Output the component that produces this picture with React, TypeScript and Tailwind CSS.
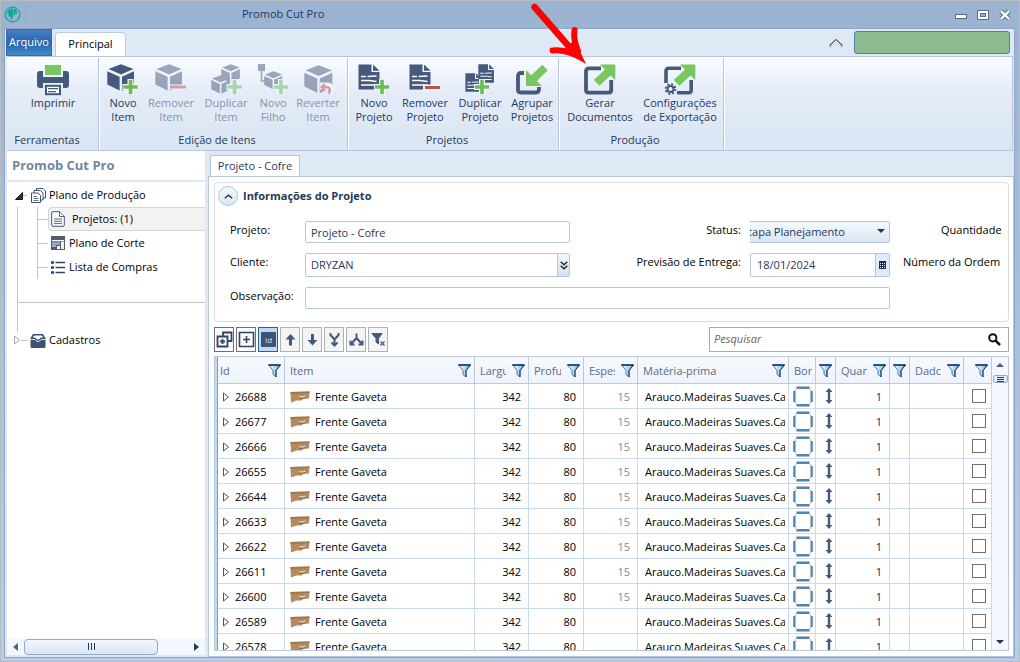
import { useState } from 'react'
import type { ReactNode } from 'react'

const NAVY = '#44597c'
const GREEN = '#79c760'

function Cube({ x = 0, y = 0, s = 1 }: { x?: number; y?: number; s?: number }) {
  return (
    <g transform={`translate(${x} ${y}) scale(${s})`} fill={NAVY}>
      <path d="M1.5 5 14 .3 26.5 5 14 10.5Z" />
      <path d="M.3 7.3 12.6 12.8V26.5L.3 20.5Z" />
      <path d="M15 12.8 27 7.3V20.5L15 26.8Z" />
    </g>
  )
}

function Plus({ x, y }: { x: number; y: number }) {
  return (
    <g transform={`translate(${x} ${y})`}>
      <path d="M-8 0H8M0-8V8" stroke="#f5f8fd" strokeWidth="6" />
      <path d="M-7.2 0H7.2M0-7.2V7.2" stroke="#6dbb55" strokeWidth="3.6" />
    </g>
  )
}

function Doc({ x = 0, y = 0, s = 1 }: { x?: number; y?: number; s?: number }) {
  return (
    <g transform={`translate(${x} ${y}) scale(${s})`}>
      <path d="M.5.5H13.5V8H21.5V25.5H.5Z" fill={NAVY} />
      <path d="M15 .5 21.5 6.8H15Z" fill={NAVY} />
      <path d="M3 12.5H8M9.5 12.5 18.5 12M3 16.5H11L18.5 17.5M3 21H18.5" stroke="#fff" strokeWidth="1.3" fill="none" />
    </g>
  )
}

function Icon({ children }: { children: ReactNode }) {
  return <svg width="32" height="32" viewBox="0 0 32 32" fill="none">{children}</svg>
}

const printIcon = (
  <Icon>
    <rect x="8" y="1" width="16" height="10" fill={GREEN} />
    <path d="M0 10Q0 7 3 7H6V13H26V7H29Q32 7 32 10V21Q32 24 29 24H26V19H6V24H3Q0 24 0 21Z" fill={NAVY} />
    <rect x="9" y="21.8" width="14" height="8.4" fill="#fff" stroke={NAVY} strokeWidth="2" />
    <path d="M11 24.7H21M11 27.6H19" stroke={NAVY} strokeWidth="1.2" />
  </Icon>
)

const exportArrow = 'M9.8 16 21 5.5 15.8.5H31.3V16L26.5 11.5 15.5 21.8Z'

const itemActions = [
  { label: ['Novo', 'Item'], width: 'w-11', icon: <Icon><Cube /><Plus x={23.5} y={23} /></Icon> },
  {
    label: ['Remover', 'Item'], width: 'w-[52px]', off: true,
    icon: <Icon><Cube /><path d="M13.5 23H31" stroke="#f5f8fd" strokeWidth="5" /><path d="M15 23H31" stroke="#c0504d" strokeWidth="3" /></Icon>,
  },
  {
    label: ['Duplicar', 'Item'], width: 'w-[58px]', off: true,
    icon: <Icon><Cube x={11} y={0} s={0.7} /><Cube x={1} y={11} s={0.7} /><Plus x={24.5} y={23} /></Icon>,
  },
  {
    label: ['Novo', 'Filho'], width: 'w-9', off: true,
    icon: (
      <Icon>
        <rect x="1" y="0" width="7" height="7" fill={NAVY} />
        <path d="M4.5 6V17H9" stroke={NAVY} strokeWidth="1.6" />
        <Cube x={7} y={7} s={0.68} />
        <Plus x={24} y={23} />
      </Icon>
    ),
  },
  {
    label: ['Reverter', 'Item'], width: 'w-[54px]', off: true,
    icon: (
      <Icon>
        <Cube x={2} y={1} s={1.05} />
        <path d="M18 22H25Q30 22 28 30" stroke="#f5f8fd" strokeWidth="7" />
        <path d="M20 23H24Q30 23.5 26.5 29.5" stroke="#c0504d" strokeWidth="2.6" />
        <path d="M17.5 23 23 19V27Z" fill="#c0504d" />
      </Icon>
    ),
  },
]

const projectActions = [
  { label: ['Novo', 'Projeto'], width: 'w-12', icon: <Icon><Doc /><Plus x={24} y={23} /></Icon> },
  {
    label: ['Remover', 'Projeto'], width: 'w-[54px]',
    icon: <Icon><Doc /><path d="M14 23.5H32" stroke="#f5f8fd" strokeWidth="6" /><path d="M16 23.5H31" stroke="#c0504d" strokeWidth="3" /></Icon>,
  },
  {
    label: ['Duplicar', 'Projeto'], width: 'w-14',
    icon: <Icon><Doc x={14} y={0} s={0.74} /><Doc x={1} y={9} s={0.74} /><Plus x={18} y={23} /></Icon>,
  },
  {
    label: ['Agrupar', 'Projetos'], width: 'w-12',
    icon: (
      <Icon>
        <path d="M8 9H5Q2 9 2 12V25.5Q2 28.5 5 28.5H20Q23 28.5 23 25V23" stroke={NAVY} strokeWidth="3.8" />
        <path d="M26.3.8 31.8 6.3 20.8 17 25.8 22H10V6.2L15.3 11.3Z" fill={GREEN} />
      </Icon>
    ),
  },
]

const exportActions = [
  {
    label: ['Gerar', 'Documentos'], width: 'w-[78px]',
    icon: (
      <Icon>
        <path d="M17 4.3H5Q2 4.3 2 7.3V26Q2 28.7 5 28.7H24.5Q27.2 28.7 27.2 26V16" stroke={NAVY} strokeWidth="3.8" />
        <path d={exportArrow} fill={GREEN} />
      </Icon>
    ),
  },
  {
    label: ['Configurações', 'de Exportação'], width: 'w-[82px]',
    icon: (
      <Icon>
        <path d="M17 4.3H5Q2 4.3 2 7.3V19M13 28.7H24.5Q27.2 28.7 27.2 26V16" stroke={NAVY} strokeWidth="3.6" />
        <path d={exportArrow} fill={GREEN} />
        <circle cx="6.5" cy="25" r="4.8" stroke={NAVY} strokeWidth="2" strokeDasharray="2 1.77" />
        <circle cx="6.5" cy="25" r="3" stroke={NAVY} strokeWidth="2" />
      </Icon>
    ),
  },
]

type Action = { label: string[]; width: string; icon: ReactNode; off?: boolean }

function RibbonGroup({ title, actions }: { title: string; actions: Action[] }) {
  return (
    <section className="flex flex-col border-r border-[#b9c6df] px-0.5 shadow-[1px_0_0_#fff]">
      <div className="flex flex-1 justify-center pt-1.5">
        {actions.map(a => (
          <button
            key={a.label.join(' ')}
            disabled={a.off}
            className={`${a.width} flex flex-col items-center text-[11px] leading-[14px] whitespace-nowrap disabled:opacity-50`}
          >
            {a.icon}
            <span className="flex flex-col items-center">
              {a.label.map(l => <span key={l}>{l}</span>)}
            </span>
          </button>
        ))}
      </div>
      <h2 className="pr-3 pb-0.5 text-center text-[11px] leading-4">{title}</h2>
    </section>
  )
}

function Funnel() {
  return (
    <svg width="13" height="14" viewBox="0 0 13 14" className="shrink-0">
      <defs>
        <linearGradient id="funnel" x1="0" x2="1">
          <stop offset="0.2" stopColor="#e6f6fd" />
          <stop offset="1" stopColor="#62b4e4" />
        </linearGradient>
      </defs>
      <path d="M.8 1H12.2L8 6.5V13L5 10.5V6.5Z" fill="url(#funnel)" stroke="#2a5c8f" strokeWidth="0.8" />
      <path d="M.3 1H12.7" stroke="#0f3a6b" strokeWidth="1.6" />
      <path d="M12.2 1.5 8 6.5V13" stroke="#12263f" strokeWidth="0.9" fill="none" />
    </svg>
  )
}

function TitleBar() {
  return (
    <header className="flex h-[27px] shrink-0 items-center pr-[3px]">
      <svg width="17" height="17" viewBox="0 0 18 18" fill="none">
        <circle cx="9" cy="9" r="7.7" stroke="#0fa99a" strokeWidth="1.3" />
        <path d="M9.5 2.5Q3.5 3 3 9L5 8 4.5 11.5 6.5 11 8 15.5 9.5 11Z" fill="#0fa99a" />
        <path d="M10 2.5Q14.5 4 14 8.5L12 8 11.5 10.5 10 9.5Z" fill="#0fa99a" />
      </svg>
      <span className="ml-1 h-5 w-px bg-[#8fa6c4]" />
      <h1 className="ml-[216px] flex-1 text-[11px] text-[#1e395b]">Promob Cut Pro</h1>
      <div className="flex items-center gap-2">
        <button aria-label="Minimizar">
          <svg width="14" height="12" viewBox="0 0 14 12"><rect x="1.5" y="5.5" width="11" height="4" fill="#fff" stroke="#5b6a85" /></svg>
        </button>
        <button aria-label="Maximizar">
          <svg width="14" height="12" viewBox="0 0 14 12" fill="none">
            <rect x="1.5" y="1.5" width="11" height="9" fill="#fff" stroke="#5b6a85" />
            <rect x="4.5" y="4.5" width="5" height="3" fill="#9ab3d1" stroke="#5b6a85" />
          </svg>
        </button>
        <button aria-label="Fechar">
          <svg width="14" height="12" viewBox="0 0 14 12">
            <path d="M3 2.2 11 9.8M11 2.2 3 9.8" stroke="#5b6a85" strokeWidth="4.4" />
            <path d="M3 2.2 11 9.8M11 2.2 3 9.8" stroke="#fff" strokeWidth="2.4" />
          </svg>
        </button>
      </div>
    </header>
  )
}

function Ribbon() {
  return (
    <>
      <nav className="flex h-[27px] shrink-0 items-end gap-[3px] bg-[#dfe9f5] pr-1">
        <button className="-ml-px h-[27px] w-[46px] border border-[#3a66b4] bg-linear-to-b from-[#4682c6] via-[#2a62ab] to-[#3f8ccc] text-[11px] text-white">
          Arquivo
        </button>
        <button className="h-6 w-[71px] rounded-t-sm border border-b-0 border-[#bccbe2] bg-white text-[11px] text-black">
          Principal
        </button>
        <div className="flex-1" />
        <button aria-label="Recolher faixa" className="mr-2 self-center">
          <svg width="14" height="8" viewBox="0 0 14 8" fill="none">
            <path d="M1 7 7 1.5 13 7" stroke="#555" strokeWidth="2.4" />
            <path d="M2 7 7 2.2 12 7" stroke="#fff" strokeWidth="1.2" />
          </svg>
        </button>
        <div className="mb-0.5 h-[23px] w-[156px] rounded-[3px] border border-[#3f80bd] bg-[#8fbc8f]" />
      </nav>
      <div className="mr-px flex h-[95px] shrink-0 border-t border-r border-b border-[#b9c6df] bg-linear-to-b from-[#fafcff] via-[#e4ebf7] via-40% to-[#dae6f4] pt-px pl-px text-[#1e395b]">
        <RibbonGroup title="Ferramentas" actions={[{ label: ['Imprimir'], width: 'w-[86px]', icon: printIcon }]} />
        <RibbonGroup title="Edição de Itens" actions={itemActions} />
        <RibbonGroup title="Projetos" actions={projectActions} />
        <RibbonGroup title="Produção" actions={exportActions} />
      </div>
    </>
  )
}

function Branch() {
  return <span className="h-px w-2.5 shrink-0 bg-[#c4c4c4]" />
}

function Sidebar() {
  return (
    <aside className="mb-0.5 flex w-[198px] shrink-0 flex-col bg-white text-[11px] text-black">
      <h2 className="flex h-[31px] items-center border-b-2 border-[#dfe8f5] px-[5px] text-[13px] font-bold text-[#72859f]">
        Promob Cut Pro
      </h2>
      <div className="flex-1 pt-0.5">
        <div className="flex h-[23px] items-center pl-2">
          <svg width="8" height="8" viewBox="0 0 8 8"><path d="M7.5.5V7.5H.5Z" fill="#333" stroke="#111" /></svg>
          <span className="mr-[3px] h-px w-1 bg-[#c4c4c4]" />
          <svg width="17" height="17" viewBox="0 0 17 17" fill="#fff" stroke="#3f5577" className="mr-0.5">
            <path d="M6.5 4V1.5H13L15.5 4V11H11" />
            <path d="M4 6V3.5H10.5L13 6V13H11" />
            <path d="M1.5 6H8L10.5 8.5V15.5H1.5Z" />
            <path d="M3.5 9.5H7M3.5 11.5H8.5M3.5 13.5H8.5" strokeWidth=".8" />
          </svg>
          Plano de Produção
        </div>
        <div className="ml-2.5 border-l border-[#c4c4c4]">
          <ul className="ml-[19px] border-l border-[#c4c4c4]">
            <li className="flex h-6 items-center">
              <Branch />
              <a href="#projetos" className="flex h-6 flex-1 items-center gap-[7px] rounded-l-sm border border-r-0 border-[#d5d5d5] bg-[#f3f2f3] pl-0.5">
                <svg width="14" height="16" viewBox="0 0 14 16" fill="#fff" stroke="#3f5577">
                  <path d="M2 .7H8.5L13.3 5.5V14Q13.3 15.3 12 15.3H2Q.7 15.3.7 14V2Q.7.7 2 .7Z" />
                  <path d="M8.5.7V5.5H13M3 8H11M3 10.3H11M3 12.6H11" strokeWidth=".9" />
                </svg>
                Projetos: (1)
              </a>
            </li>
            <li className="flex h-6 items-center">
              <Branch />
              <a href="#corte" className="flex items-center gap-1 pl-[3px]">
                <svg width="14" height="14" viewBox="0 0 14 14">
                  <rect width="14" height="14" fill="#555c69" />
                  <path d="M1 4.5H13M1 10H5M6 7H9" stroke="#fff" />
                  <rect x="1" y="5.5" width="8" height="3.5" fill="#8fa2c2" />
                  <rect x="6" y="10" width="3" height="3" fill="#fff" />
                  <rect x="10" y="5.5" width="3" height="7.5" fill="#e8edf5" />
                </svg>
                Plano de Corte
              </a>
            </li>
            <li className="flex h-6 items-center">
              <Branch />
              <a href="#compras" className="flex items-center gap-1 pl-[3px]">
                <svg width="14" height="13" viewBox="0 0 14 13" stroke="#2f4568">
                  <path d="M0 1.5H3M0 6.5H3M0 11.5H3" strokeWidth="2.6" />
                  <path d="M4.5 1.5H14M4.5 6.5H14M4.5 11.5H14" strokeWidth="1.3" />
                </svg>
                Lista de Compras
              </a>
            </li>
          </ul>
          <div className="h-6 border-b border-[#c4c4c4]" />
          <div className="h-[29px]" />
        </div>
        <div className="flex h-4 items-center pl-1.5">
          <svg width="8" height="10" viewBox="0 0 8 10"><path d="M1.5 1 6.5 5 1.5 9Z" fill="#fff" stroke="#a8a8a8" /></svg>
          <span className="mr-0.5 h-px w-[7px] bg-[#c4c4c4]" />
          <svg width="16" height="15" viewBox="0 0 16 15" className="mr-[3px]">
            <path d="M3 1H13L15.5 5V13.5Q15.5 15 14 15H2Q.5 15 .5 13.5V5Z" fill="#3d5275" />
            <path d="M3 4.5Q3 2.5 5 2.5H11Q13 2.5 13 4.5H10.5Q10 6.5 8 6.5T5.5 4.5Z" fill="#fff" />
            <path d="M.5 6.5H5Q6 8.5 8 8.5T11 6.5H15.5" stroke="#fff" strokeWidth=".8" fill="none" />
          </svg>
          Cadastros
        </div>
      </div>
      <div className="flex h-[17px] items-center bg-[#f4f7fd] px-1.5">
        <svg width="5" height="8" viewBox="0 0 5 8"><path d="M5 0V8L0 4Z" fill="#4b6286" /></svg>
        <div className="ml-1.5 flex h-4 w-[134px] items-center justify-center gap-0.5 rounded-sm border border-[#93a8c8] bg-linear-to-b from-[#f2f7fd] to-[#dbe6f5]">
          <span className="h-[7px] w-px bg-[#1e395b]" />
          <span className="h-[7px] w-px bg-[#1e395b]" />
          <span className="h-[7px] w-px bg-[#1e395b]" />
        </div>
        <div className="flex-1" />
        <svg width="5" height="8" viewBox="0 0 5 8"><path d="M0 0V8L5 4Z" fill="#1e395b" /></svg>
      </div>
    </aside>
  )
}

function ProjectForm() {
  const [name, setName] = useState('Projeto - Cofre')
  const [client, setClient] = useState('DRYZAN')
  const [date, setDate] = useState('18/01/2024')
  const [note, setNote] = useState('')

  return (
    <section className="shrink-0 rounded-sm border border-[#dcdcdc] pb-3">
      <div className="flex items-center gap-[5px] pt-[3px] pl-[3px]">
        <button aria-label="Recolher" className="flex size-5 items-center justify-center rounded-full border border-[#b2c6e0] bg-linear-to-b from-[#f4f8fd] to-[#dbe6f4]">
          <svg width="9" height="5" viewBox="0 0 9 5" fill="none"><path d="M.8 4.3 4.5 1.2 8.2 4.3" stroke="#1e395b" strokeWidth="1.4" /></svg>
        </button>
        <h2 className="text-[11px] leading-5 font-bold text-[#1e395b]">Informações do Projeto</h2>
      </div>
      <div className="mt-[15px] grid grid-cols-[75px_265px_1fr_140px_112px] gap-y-2.5 pr-1.5 pl-[15px] text-[11px] leading-[18px] whitespace-nowrap text-black">
        <label htmlFor="projeto">Projeto:</label>
        <input id="projeto" value={name} onChange={e => setName(e.target.value)} className="h-[22px] rounded-xs border border-[#b5c6df] px-[5px] text-[#1e395b] outline-none" />
        <label htmlFor="status" className="pr-[9px] text-right">Status:</label>
        <div className="flex justify-end overflow-hidden">
          <select
            id="status"
            className="h-[22px] w-[149px] shrink-0 appearance-none rounded-xs border border-[#b5c6df] bg-linear-to-b from-[#f5f9fe] to-[#dae6f5] text-[#1e395b] outline-none"
          >
            <option>Etapa Planejamento</option>
          </select>
          <svg width="8" height="22" viewBox="0 0 8 22" className="pointer-events-none mr-[5px] -ml-[13px] shrink-0"><path d="M0 8H8L4 12Z" fill="#1e395b" /></svg>
        </div>
        <span className="overflow-hidden pl-[51px]">Quantidade</span>

        <label htmlFor="cliente">Cliente:</label>
        <div className="flex h-6 rounded-xs border border-[#b5c6df]">
          <input id="cliente" value={client} onChange={e => setClient(e.target.value)} className="min-w-0 flex-1 px-[5px] text-[#1e395b] outline-none" />
          <button aria-label="Escolher cliente" className="flex w-3 items-center justify-center border-l border-[#b5c6df] bg-linear-to-b from-[#f3f8fd] to-[#d3e0f0]">
            <svg width="8" height="9" viewBox="0 0 8 9" fill="none"><path d="M.7.7 4 3.8 7.3.7M.7 4.7 4 7.8 7.3 4.7" stroke="#222" strokeWidth="1.4" /></svg>
          </button>
        </div>
        <label htmlFor="previsao" className="pr-[9px] text-right">Previsão de Entrega:</label>
        <div className="flex h-6 rounded-xs border border-[#b5c6df]">
          <input id="previsao" value={date} onChange={e => setDate(e.target.value)} className="min-w-0 flex-1 px-[6px] text-[#1e395b] outline-none" />
          <button aria-label="Abrir calendário" className="flex w-3.5 items-center justify-center border-l border-[#b5c6df] bg-[#e1eaf6]">
            <svg width="7" height="8" viewBox="0 0 7 8" shapeRendering="crispEdges">
              <rect width="7" height="8" fill="#1e2f4d" />
              <path d="M1 2.5H2M3 2.5H4M5 2.5H6M1 4.5H2M3 4.5H4M5 4.5H6M1 6.5H2M3 6.5H4M5 6.5H6" stroke="#e8effa" />
            </svg>
          </button>
        </div>
        <span className="overflow-hidden pl-[13px]">Número da Ordem</span>

        <label htmlFor="observacao">Observação:</label>
        <input id="observacao" value={note} onChange={e => setNote(e.target.value)} className="col-span-3 h-[22px] rounded-xs border border-[#b5c6df] px-[5px] text-[#1e395b] outline-none" />
      </div>
    </section>
  )
}

const tools = [
  { name: 'Expandir todos', kind: 'plain', icon: <path d="M7 5V1.5H15.5V10H12M1.5 5.5H11.5V15.5H1.5ZM6.5 8V13M4 10.5H9" strokeWidth="1.8" /> },
  { name: 'Expandir', kind: 'plain', icon: <path d="M1.5 1.5H15.5V15.5H1.5ZM8.5 5V12M5 8.5H12" strokeWidth="1.6" /> },
  { name: 'Agrupar por Id', kind: 'on', icon: <><rect x="1" y="1" width="15" height="15" rx="1" fill="#3d5275" stroke="none" /><text x="5" y="12" fontSize="8" fill="#d4e6f5" stroke="none">Id</text></> },
  { name: 'Mover para cima', kind: 'soft', icon: <path d="M8.5 3 13.5 8.5H10V14.5H7V8.5H3.5Z" fill={NAVY} stroke="none" /> },
  { name: 'Mover para baixo', kind: 'soft', icon: <path d="M8.5 14.5 13.5 9H10V3H7V9H3.5Z" fill={NAVY} stroke="none" /> },
  { name: 'Unir', kind: 'soft', icon: <path d="M4.5 2V4L8.500 8.500 12.500 4V2M8.500 8V14M5.500 11.500 8.500 14.500 11.500 11.500" strokeWidth="2" /> },
  { name: 'Separar', kind: 'soft', icon: <path d="M8.5 2.5V7L3.5 12.5M8.5 7 13.5 12.500M2.500 9.500V13.500H6.500M14.500 9.500V13.500H10.500" strokeWidth="2" /> },
  { name: 'Limpar filtro', kind: 'soft', icon: <><path d="M2 2.5H12L8.5 7.5V13L6 11V7.5Z" fill={NAVY} strokeWidth="1" /><path d="M10.5 10.5 14.5 14.5M14.5 10.5 10.5 14.5" strokeWidth="1.3" /></> },
]

const toolStyles: Record<string, string> = {
  on: 'border-[#2c628b] bg-[#bcdcf1]',
  plain: 'border-[#707070] bg-[#fbfbfd]',
  soft: 'border-[#adb2b5] bg-[#f4f4f4]',
}

function Toolbar() {
  const [query, setQuery] = useState('')
  return (
    <div className="mt-[5px] flex h-[25px] shrink-0 items-stretch gap-0.5">
      {tools.map(t => (
        <button key={t.name} title={t.name} className={`flex w-5 items-center justify-center border ${toolStyles[t.kind]}`}>
          <svg width="17" height="17" viewBox="0 0 17 17" fill="none" stroke={t.kind === 'soft' ? NAVY : '#2f4560'} className="shrink-0">{t.icon}</svg>
        </button>
      ))}
      <div className="flex-1" />
      <div className="flex w-[300px] items-center border border-[#ababab] pr-[7px] pl-1">
        <input
          aria-label="Pesquisar"
          placeholder="Pesquisar"
          value={query}
          onChange={e => setQuery(e.target.value)}
          className="min-w-0 flex-1 text-[11px] italic outline-none placeholder:text-[#666]"
        />
        <svg width="13" height="13" viewBox="0 0 13 13" fill="none" stroke="#111">
          <circle cx="4.8" cy="4.8" r="3.6" strokeWidth="2" />
          <path d="M7.6 7.6 12 12" strokeWidth="2.6" />
        </svg>
      </div>
    </div>
  )
}

const columns = [
  { title: 'Id', width: 'w-[67px]', filter: true },
  { title: 'Item', width: 'w-auto', filter: true },
  { title: 'Largu', width: 'w-[54px]', filter: true },
  { title: 'Profu', width: 'w-[55px]', filter: true },
  { title: 'Espes', width: 'w-[54px]', filter: true },
  { title: 'Matéria-prima', width: 'w-[151px]', filter: true },
  { title: 'Bor', width: 'w-[27px]', filter: false },
  { title: '', width: 'w-[20px]', filter: true },
  { title: 'Quan', width: 'w-[54px]', filter: true },
  { title: '', width: 'w-[20px]', filter: true },
  { title: 'Dadc', width: 'w-[54px]', filter: true },
  { title: '', width: 'w-[28px]', filter: true },
]

const ids = [26688, 26677, 26666, 26655, 26644, 26633, 26622, 26611, 26600, 26589, 26578]

function ItemsTable() {
  return (
    <div className="mt-1 flex min-h-0 flex-1 border border-[#b9c9e0]">
      <div className="w-[3px] shrink-0 border-r border-[#8d9bb0] bg-[#c9d6e8]" />
      <div className="min-w-0 flex-1 overflow-hidden">
        <table className="w-full table-fixed border-separate border-spacing-0 text-[11px] whitespace-nowrap">
          <thead>
            <tr className="h-[27px] bg-linear-to-b from-[#f6f9ff] to-[#eef2fc] text-left text-[#5a6b85]">
              {columns.map((c, i) => (
                <th key={i} className={`${c.width} border-r border-b border-[#b9c9e0] p-0 font-normal`}>
                  <div className={`flex items-center gap-1.5 pt-0.5 pr-[3px] ${c.title ? i === 0 ? 'pl-0.5' : 'pl-[5px]' : 'justify-end'}`}>
                    {c.title && <span className="min-w-0 flex-1 overflow-hidden">{c.title}</span>}
                    {c.filter && <Funnel />}
                  </div>
                </th>
              ))}
            </tr>
          </thead>
          <tbody className="text-black [&_div]:pt-0.5 [&_td]:h-[25px] [&_td]:border-r [&_td]:border-b [&_td]:border-[#c8daf3] [&_td]:p-0">
            {ids.map((id, n) => (
              <tr key={id}>
                <td>
                  <div className="flex items-center gap-[5px] pl-1">
                    <svg width="8" height="10" viewBox="0 0 8 10"><path d="M1.5 1 6.5 5 1.5 9Z" fill="#fff" stroke="#555" /></svg>
                    {id}
                  </div>
                </td>
                <td>
                  <div className="flex items-center gap-[5px] pl-[5px]">
                    <svg width="20" height="12" viewBox="0 0 20 12">
                      <path d="M.5 1 19.5.5 19 7.5 13 8 12 9.5 6.5 9.5 1 11.5Z" fill="#b58a5c" />
                      <path d="M.5 1 19.5.5V2L.5 3Z" fill="#a0774a" />
                      <path d="M9 5.5Q12 7 15 5" stroke="#e5e5e8" strokeWidth="1.3" fill="none" />
                      <path d="M9 7Q12 8 15 6.5" stroke="#75573a" strokeWidth=".8" fill="none" />
                    </svg>
                    Frente Gaveta
                  </div>
                </td>
                <td><div className="pr-[7px] text-right">342</div></td>
                <td><div className="pr-[7px] text-right">80</div></td>
                <td><div className="pr-[7px] text-right text-[#8a8a8a]">{n < 9 ? '15' : ''}</div></td>
                <td><div className="mr-[3px] ml-[7px] overflow-hidden">Arauco.Madeiras Suaves.Ca</div></td>
                <td>
                  <svg width="20" height="21" viewBox="0 0 20 21" className="ml-1">
                    <path d="M3.5 1H16.5M3.5 20H16.5" stroke="#b8b8b8" strokeWidth="2" />
                    <path d="M3.5 2H16.5M3.5 19H16.5" stroke="#4a86b8" strokeWidth="2" />
                    <path d="M1.2 5V16M18.8 5V16" stroke="#4a86b8" strokeWidth="2" />
                    <path d="M2.6 3V18M17.4 3V18" stroke="#b8b8b8" />
                  </svg>
                </td>
                <td>
                  <svg width="8" height="16" viewBox="0 0 8 16" className="ml-[9px]" fill={NAVY}>
                    <path d="M4 0 7.5 4H5.2V12H7.5L4 16 .5 12H2.8V4H.5Z" />
                  </svg>
                </td>
                <td><div className="pr-[7px] text-right text-[#1e1e5b]">1</div></td>
                <td />
                <td />
                <td><input type="checkbox" aria-label={`Selecionar ${id}`} className="ml-2 block size-3.5 appearance-none border border-[#707070] bg-white" /></td>
              </tr>
            ))}
          </tbody>
        </table>
      </div>
      <div className="flex w-4 shrink-0 flex-col items-center bg-[#f4f7fd] py-1.5">
        <svg width="8" height="4" viewBox="0 0 8 4"><path d="M0 4H8L4 0Z" fill="#4b6286" /></svg>
        <div className="mt-2 flex h-2 w-[15px] flex-col items-center justify-center gap-px rounded-xs border border-[#93a8c8] bg-[#e6eef9]">
          <span className="h-px w-[7px] bg-[#1e395b]" />
          <span className="h-px w-[7px] bg-[#1e395b]" />
          <span className="h-px w-[7px] bg-[#1e395b]" />
        </div>
        <div className="flex-1" />
        <svg width="8" height="4" viewBox="0 0 8 4"><path d="M0 0H8L4 4Z" fill="#1e395b" /></svg>
      </div>
    </div>
  )
}

export default function App() {
  return (
    <div className="relative flex h-screen flex-col overflow-hidden border border-[#b9bcc0] bg-linear-to-b from-[#9ab3d1] to-[#b7cee9] pr-1 pb-[3px] pl-[3px] font-['Open_Sans',sans-serif]">
      <TitleBar />
      <div className="flex min-h-0 flex-1 flex-col border border-[#8fa6c4] bg-[#dfe8f5] pl-0.5">
        <Ribbon />
        <div className="flex min-h-0 flex-1">
          <Sidebar />
          <main className="ml-[3px] flex min-w-0 flex-1 flex-col">
            <div className="flex h-[25px] shrink-0 items-end">
              <button className="-mb-px ml-0.5 h-[22px] w-[90px] border border-b-0 border-[#b5c6df] bg-white text-[11px] text-[#1e395b]">
                Projeto - Cofre
              </button>
            </div>
            <div className="flex min-h-0 flex-1 flex-col border border-[#b5c6df] bg-white p-[5px] pr-1">
              <ProjectForm />
              <Toolbar />
              <ItemsTable />
            </div>
          </main>
        </div>
      </div>

      {/* red pointer over "Gerar Documentos" */}
      <svg width="60" height="66" viewBox="0 0 60 66" fill="none" className="pointer-events-none absolute top-0 left-[529px]">
        <path d="M4.5 6 42 49" stroke="#f00" strokeWidth="6.5" strokeLinecap="round" />
        <path d="M22.5 49.5Q31 48.500 42 52M44.500 29Q43 38 48 50" stroke="#f00" strokeWidth="6" strokeLinecap="round" />
        <path d="M34 49 45 38Q50 51 56 63Q45 56 32 52Z" fill="#f00" />
      </svg>
    </div>
  )
}
